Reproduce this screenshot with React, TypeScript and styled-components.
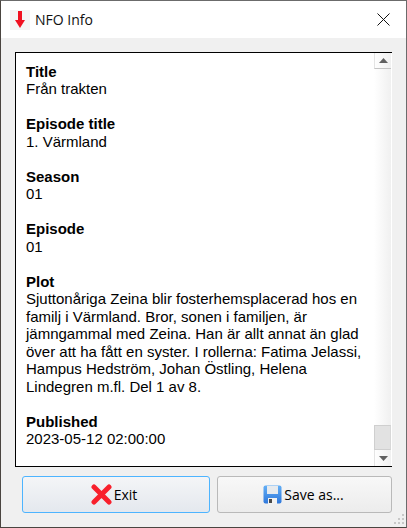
import React from 'react';
import styled, { createGlobalStyle } from 'styled-components';

const GlobalStyle = createGlobalStyle`
  html, body {
    margin: 0;
    padding: 0;
    background: #f0f0f0;
  }
  body {
    font-family: "Open Sans", "Noto Sans", sans-serif;
    color: #000;
  }
`;

const Window = styled.div`
  box-sizing: border-box;
  width: 407px;
  height: 528px;
  display: flex;
  flex-direction: column;
  background: #f0f0f0;
  border: 1px solid #6b6b6b;
  border-left-color: #4a4540;
  border-bottom-color: #4a4540;
  position: relative;
`;

const TitleBar = styled.div`
  height: 37px;
  flex: none;
  display: flex;
  align-items: center;
  background: #fff;
  padding-left: 9px;
`;

const TitleIcon = styled.div`
  width: 20px;
  height: 20px;
  background: #f4f4f4;
  display: flex;
  align-items: center;
  justify-content: center;
`;

const TitleText = styled.span`
  margin-left: 5px;
  font-size: 14px;
  color: #111;
`;

const CloseButton = styled.div`
  margin-left: auto;
  width: 46px;
  height: 37px;
  display: flex;
  align-items: center;
  justify-content: center;
`;

const Body = styled.div`
  flex: 1;
  display: flex;
  flex-direction: column;
  padding: 14px 14px 0 14px;
  min-height: 0;
`;

const TextBox = styled.div`
  box-sizing: border-box;
  height: 415px;
  flex: none;
  display: flex;
  border: 1px solid #000;
  border-right: none;
  background: #fff;
`;

const Content = styled.div`
  flex: 1;
  padding: 9.9px 10px 0 10px;
  font-family: "Liberation Sans", Arial, sans-serif;
  font-size: 15px;
  line-height: 17.5px;
`;

const Field = styled.div`
  margin-bottom: 17.5px;
`;

const FieldLabel = styled.div`
  font-weight: 700;
`;

const FieldValue = styled.div``;

const ScrollBar = styled.div`
  width: 17px;
  flex: none;
  display: flex;
  flex-direction: column;
  margin-right: 1px;
  background: linear-gradient(to right, #fff, #f0f0f0);
`;

const ScrollArrow = styled.div<{ $up?: boolean }>`
  height: 16px;
  flex: none;
  box-sizing: border-box;
  display: flex;
  align-items: center;
  justify-content: center;
  border-left: 1px solid #e4e4e4;
  ${({ $up }) => ($up ? 'border-bottom: 1px solid #c4c4c4;' : '')}
`;

const Track = styled.div`
  flex: 1;
  display: flex;
  flex-direction: column;
  justify-content: flex-end;
`;

const Thumb = styled.div`
  height: 25px;
  background: #e2e2e2;
  border: 1px solid #cfcfcf;
  border-right-color: #d8d8d8;
  box-sizing: border-box;
`;

const ButtonRow = styled.div`
  display: flex;
  justify-content: space-between;
  padding: 9px 0 0 7px;
`;

const Button = styled.div<{ $focused?: boolean }>`
  box-sizing: border-box;
  width: ${({ $focused }) => ($focused ? '188px' : '175px')};
  height: 37px;
  display: flex;
  align-items: center;
  justify-content: center;
  gap: 2px;
  padding-right: ${({ $focused }) => ($focused ? '4px' : '2px')};
  font-size: 14px;
  border-radius: 3px;
  border: 1px solid ${({ $focused }) => ($focused ? '#4db4ff' : '#b9b9b9')};
  background: ${({ $focused }) =>
    $focused ? 'linear-gradient(to bottom, #f4f5f7, #e4e8ee)' : 'linear-gradient(to bottom, #f8f8f8, #ececec)'};
`;

const Grip = styled.svg`
  position: absolute;
  right: 1px;
  bottom: 2px;
`;

const fields = [
  { label: 'Title', value: 'Från trakten' },
  { label: 'Episode title', value: '1. Värmland' },
  { label: 'Season', value: '01' },
  { label: 'Episode', value: '01' },
  {
    label: 'Plot',
    value:
      'Sjuttonåriga Zeina blir fosterhemsplacerad hos en familj i Värmland. Bror, sonen i familjen, är jämngammal med Zeina. Han är allt annat än glad över att ha fått en syster. I rollerna: Fatima Jelassi, Hampus Hedström, Johan Östling, Helena Lindegren m.fl. Del 1 av 8.',
  },
  { label: 'Published', value: '2023-05-12 02:00:00' },
];

const App: React.FC = () => {
  return (
    <>
      <GlobalStyle />
      <Window>
        <TitleBar>
          <TitleIcon>
            <svg width="10" height="18" viewBox="0 0 10 18">
              <path d="M3 0h4v9h3l-5 8-5-8h3z" fill="#f01020" />
            </svg>
          </TitleIcon>
          <TitleText>NFO Info</TitleText>
          <CloseButton>
            <svg width="13" height="13" viewBox="0 0 13 13">
              <path d="M.5.5l12 12M12.500.5l-12 12" stroke="#111" strokeWidth="1" fill="none" />
            </svg>
          </CloseButton>
        </TitleBar>
        <Body>
          <TextBox>
            <Content>
              {fields.map((f) => (
                <Field key={f.label}>
                  <FieldLabel>{f.label}</FieldLabel>
                  <FieldValue>{f.value}</FieldValue>
                </Field>
              ))}
            </Content>
            <ScrollBar>
              <ScrollArrow $up>
                <svg width="9" height="5" viewBox="0 0 9 5">
                  <path d="M4.500 0L9 5H0z" fill="#606060" />
                </svg>
              </ScrollArrow>
              <Track>
                <Thumb />
              </Track>
              <ScrollArrow>
                <svg width="9" height="5" viewBox="0 0 9 5">
                  <path d="M0 0h9L4.500 5z" fill="#606060" />
                </svg>
              </ScrollArrow>
            </ScrollBar>
          </TextBox>
          <ButtonRow>
            <Button $focused>
              <svg width="21" height="21" viewBox="0 0 21 21">
                <path d="M3 3l15 15M18 3L3 18" stroke="#f8202c" strokeWidth="5" strokeLinecap="round" fill="none" />
              </svg>
              Exit
            </Button>
            <Button>
              <svg width="19" height="19" viewBox="0 0 19 19">
                <defs>
                  <linearGradient id="floppy" x1="0" y1="0" x2="0" y2="1">
                    <stop offset="0" stopColor="#62aef5" />
                    <stop offset="1" stopColor="#2f78dc" />
                  </linearGradient>
                </defs>
                <rect x="0.500" y="0.500" width="18" height="18" rx="2" fill="url(#floppy)" />
                <rect x="4" y="1" width="11" height="8" fill="#e6eaee" />
                <rect x="5" y="13" width="9" height="6" fill="#f2f2f2" />
                <rect x="6" y="14" width="3" height="4" fill="#4a4a4a" />
              </svg>
              Save as...
            </Button>
          </ButtonRow>
        </Body>
        <Grip width="12" height="12" viewBox="0 0 12 12">
          <g fill="#c8c8c8">
            <rect x="9" y="1" width="2" height="2" />
            <rect x="5" y="5" width="2" height="2" />
            <rect x="9" y="5" width="2" height="2" />
            <rect x="1" y="9" width="2" height="2" />
            <rect x="5" y="9" width="2" height="2" />
            <rect x="9" y="9" width="2" height="2" />
          </g>
        </Grip>
      </Window>
    </>
  );
};

export default App;
